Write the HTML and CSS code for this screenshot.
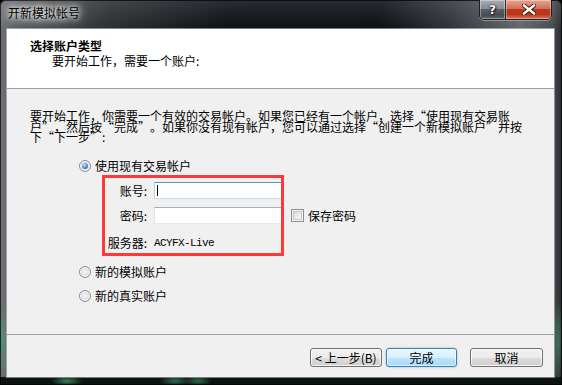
FILE: index.html
```html
<!DOCTYPE html>
<html lang="zh-CN">
<head>
<meta charset="utf-8">
<title>开新模拟帐号</title>
<link rel="stylesheet" href="styles.css">
</head>
<body>
<div class="window">
  <header class="titlebar">
    <span class="title">开新模拟帐号</span>
    <div class="caption">
      <span class="cap-btn cap-help">?</span>
      <span class="cap-btn cap-close">
        <svg width="14" height="11" viewBox="0 0 14 11"><path d="M2 1.5 L12 9.5 M12 1.5 L2 9.5" stroke="#3a1208" stroke-width="4.2" stroke-linecap="square"/><path d="M2 1.5 L12 9.5 M12 1.5 L2 9.5" stroke="#ffffff" stroke-width="2.4" stroke-linecap="square"/></svg>
      </span>
    </div>
  </header>
  <main class="client">
    <section class="banner">
      <div class="banner-title">选择账户类型</div>
      <div class="banner-sub">要开始工作，需要一个账户:</div>
    </section>
    <section class="content">
      <p class="intro"><span class="line">要开始工作，你需要一个有效的交易帐户。如果您已经有一个帐户，选择<span class="q open">“</span>使用现有交易账</span><span class="line">户<span class="q close">”</span>，然后按<span class="q open">“</span>完成<span class="q close">”</span>。如果你没有现有帐户，您可以通过选择<span class="q open">“</span>创建一个新模拟账户<span class="q close">”</span>并按</span><span class="line">下<span class="q open">“</span>下一步<span class="q close">”</span>:</span></p>
      <div class="radio-row first"><span class="radio checked"></span><span>使用现有交易帐户</span></div>
      <div class="login">
        <div class="login-grid">
          <span class="lbl">账号:</span>
          <span class="input focused"><span class="caret"></span></span>
          <span></span>
          <span class="lbl">密码:</span>
          <span class="input"></span>
          <span class="check-row"><span class="check"></span><span>保存密码</span></span>
          <span class="lbl">服务器:</span>
          <span class="server">ACYFX-Live</span>
          <span></span>
        </div>
        <div class="highlight"></div>
      </div>
      <div class="radio-row second"><span class="radio"></span><span>新的模拟账户</span></div>
      <div class="radio-row third"><span class="radio"></span><span>新的真实账户</span></div>
    </section>
    <footer class="buttons">
      <span class="btn btn-back">&lt; 上一步(B)</span>
      <span class="btn btn-default">完成</span>
      <span class="btn btn-cancel">取消</span>
    </footer>
  </main>
</div>
</body>
</html>
```
FILE: styles.css
```css
* { box-sizing: border-box; }

body {
  margin: 0;
  font-family: "Noto Sans CJK SC", "Liberation Sans", sans-serif;
  font-size: 12px;
  color: #000;
  background: #000;
}

.window {
  width: 562px;
  height: 385px;
  display: flex;
  flex-direction: column;
  border-radius: 6px 6px 0 0;
  overflow: hidden;
  background:
    radial-gradient(ellipse 16px 5px at 67px 381px, rgba(70,170,120,0.75), transparent),
    radial-gradient(ellipse 16px 5px at 175px 381px, rgba(70,170,120,0.6), transparent),
    radial-gradient(ellipse 14px 5px at 198px 381px, rgba(70,170,120,0.6), transparent),
    radial-gradient(ellipse 5px 40px at 3px 340px, rgba(70,170,120,0.55), transparent),
    radial-gradient(ellipse 5px 40px at 558px 340px, rgba(70,170,120,0.5), transparent),
    linear-gradient(to bottom, transparent 377px, #0d1311 377px),
    linear-gradient(to bottom, rgba(255,255,255,0.12) 0, rgba(255,255,255,0) 29px),
    linear-gradient(to right, #6f7174 0, #56595c 20px, #2a2d31 110px, #0c0f14 230px, #0b0e13 380px, #30343a 450px, #64686c 520px, #4a4d50 552px, #2a2c2e 562px);
  box-shadow: inset 0 0 0 1px rgba(0,0,0,0.7);
}

/* ---------- title bar ---------- */
.titlebar {
  height: 29px;
  flex: none;
  display: flex;
  justify-content: space-between;
  align-items: flex-start;
  padding: 0 10px 0 8px;
}

.title {
  margin-top: 6px;
  line-height: 14px;
  color: #000;
  text-shadow: 0 0 5px #fff, 0 0 9px #fff, 0 0 13px rgba(255,255,255,0.9);
}

.caption {
  display: flex;
  height: 20px;
  border: 1px solid rgba(20,20,20,0.85);
  border-top: none;
  border-radius: 0 0 5px 5px;
  overflow: hidden;
  box-shadow: 0 1px 0 rgba(255,255,255,0.35);
}

.cap-btn {
  display: flex;
  align-items: center;
  justify-content: center;
  height: 100%;
  box-shadow: inset 0 0 0 1px rgba(255,255,255,0.35);
}

.cap-help {
  width: 26px;
  font-family: "DejaVu Sans", sans-serif;
  font-weight: bold;
  font-size: 12px;
  color: #fff;
  text-shadow: 0 0 1px #000, 0 0 2px #000, 1px 1px 1px #222;
  background: linear-gradient(to bottom, #a9aeb3 0%, #868c92 45%, #5a6067 50%, #474d54 80%, #60666c 100%);
  border-right: 1px solid rgba(20,20,20,0.8);
}

.cap-close {
  width: 45px;
  background: linear-gradient(to bottom, #e6a594 0%, #d26e55 45%, #bb3a1e 50%, #b93519 75%, #d7785a 100%);
}

.cap-close svg { display: block; }

/* ---------- client ---------- */
.client {
  flex: none;
  height: 348px;
  margin: 0 8px 0 7px;
  display: flex;
  flex-direction: column;
  background: #f0f0f0;
  box-shadow: 0 0 0 1px rgba(210,214,220,0.55);
}

.banner {
  flex: none;
  height: 60px;
  background: #fff;
  border-bottom: 1px solid #a0a0a0;
  padding: 9px 0 0 23px;
}

.banner-title {
  font-weight: bold;
  line-height: 15px;
}

.banner-sub {
  line-height: 15px;
  padding-left: 22px;
}

.content {
  flex: 1;
  padding: 22px 0 0 23px;
}

.intro {
  margin: 0;
  display: flex;
  flex-direction: column;
  white-space: nowrap;
}

.intro .line {
  display: block;
  height: 10.5px;
  line-height: 10.5px;
}

.q {
  display: inline-block;
  width: 12px;
}

.q.open { text-align: right; }
.q.close { text-align: left; }

.radio-row {
  display: flex;
  align-items: center;
  gap: 4px;
  height: 14px;
  line-height: 14px;
  margin-left: 49px;
}

.radio-row.first { margin-top: 16.5px; }
.radio-row.second { margin-top: 12px; }
.radio-row.third { margin-top: 10px; }

.radio {
  width: 12px;
  height: 12px;
  border-radius: 50%;
  border: 1px solid #8c8e91;
  background: radial-gradient(circle at 50% 50%, #f4f4f4 0, #e6e6e6 45%, #cfd1d3 100%);
  box-shadow: inset 0 0 0 1px #fbfbfb;
  position: relative;
}

.radio.checked::after {
  content: "";
  position: absolute;
  left: 2px;
  top: 2px;
  width: 6px;
  height: 6px;
  border-radius: 50%;
  background: radial-gradient(circle at 40% 35%, #d4ecff 0, #4a9be0 45%, #15508c 100%);
}

/* ---------- login group ---------- */
.login {
  position: relative;
  margin: 9px 0 0 76px;
}

.login-grid {
  display: grid;
  grid-template-columns: 41px 128px auto;
  grid-template-rows: 17px 17px 21px;
  column-gap: 7px;
  row-gap: 8px;
  align-items: center;
}

.lbl {
  justify-self: end;
  line-height: 14px;
}

.input {
  height: 17px;
  display: flex;
  align-items: center;
  padding-left: 2px;
  background: #fff;
  border: 1px solid;
  border-color: #abadb3 #dbdfe6 #e3e9ef #e2e3ea;
}

.input.focused {
  border-color: #5c93c6 #b5d0e8 #c4dcef #b5d0e8;
}

.caret {
  width: 1px;
  height: 11px;
  background: #000;
}

.server {
  font-family: "Liberation Mono", monospace;
  font-size: 11px;
  letter-spacing: -0.6px;
  line-height: 14px;
}

.check-row {
  display: flex;
  align-items: center;
  gap: 4px;
  margin-left: 2px;
  line-height: 14px;
}

.check {
  width: 13px;
  height: 13px;
  border: 1px solid #8f8f8f;
  background: linear-gradient(135deg, #d0d0d0 0, #ececec 55%, #fafafa 100%);
  box-shadow: inset 0 0 0 1px #f4f4f4, inset 0 0 0 2px #c9c9c9;
}

.highlight {
  position: absolute;
  left: -4px;
  top: -7px;
  width: 182px;
  height: 81px;
  border: 3px solid #fd3a3a;
  pointer-events: none;
}

/* ---------- footer buttons ---------- */
.buttons {
  flex: none;
  height: 43px;
  border-top: 1px solid #a0a0a0;
  display: flex;
  justify-content: flex-end;
  align-items: flex-start;
  padding: 13px 11px 0 0;
}

.btn {
  height: 19px;
  display: flex;
  align-items: center;
  justify-content: center;
  line-height: 14px;
  border: 1px solid #707070;
  border-radius: 3px;
  background: linear-gradient(to bottom, #f2f2f2 0%, #ebebeb 50%, #dddddd 51%, #cfcfcf 100%);
  box-shadow: inset 0 0 0 1px rgba(255,255,255,0.75);
}

.btn-back { width: 72px; margin-right: 4px; }
.btn-default {
  width: 71px;
  margin-right: 13px;
  border-color: #3c7fb1;
  background: linear-gradient(to bottom, #eaf6fd 0%, #d9f0fc 50%, #bee6fd 51%, #a7d9f5 100%);
  box-shadow: inset 0 0 0 1px rgba(255,255,255,0.6), 0 0 2px rgba(60,140,200,0.6);
}
.btn-cancel { width: 73px; }
```
